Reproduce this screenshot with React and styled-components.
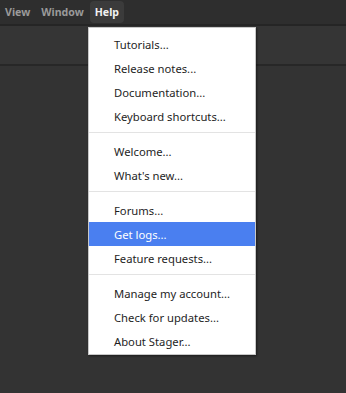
import React from "react";
import styled, { createGlobalStyle } from "styled-components";

const Global = createGlobalStyle`
  html, body { margin: 0; padding: 0; }
  body {
    background: #333333;
    font-family: "Noto Sans", "Open Sans", sans-serif;
    width: 346px;
    height: 393px;
    overflow: hidden;
  }
`;

const Page = styled.div`
  position: relative;
  width: 346px;
  height: 393px;
  background: #333333;
  display: flex;
  flex-direction: column;
`;

const MenuBar = styled.div`
  height: 24px;
  background: #2e2e2e;
  border-bottom: 2px solid #252525;
  display: flex;
  align-items: center;
`;

const MenuTitle = styled.div`
  font-family: "Noto Sans", sans-serif;
  font-weight: 700;
  font-size: 10.6px;
  color: ${(p) => (p.$active ? "#f2f2f2" : "#9a9a9a")};
  background: ${(p) => (p.$active ? "#3b3b3b" : "transparent")};
  border-radius: 4px;
  height: 22px;
  display: flex;
  align-items: center;
  padding: 0 5px;
  margin-right: 1px;
`;

const Toolbar = styled.div`
  height: 38px;
  background: #353535;
  border-bottom: 2px solid #272727;
`;

const Body = styled.div`
  flex: 1;
  background: #333333;
`;

const Dropdown = styled.div`
  position: absolute;
  left: 88px;
  top: 27px;
  width: 166px;
  background: #ffffff;
  border: 1px solid #c8c8c8;
  box-shadow: 1px 1px 2px rgba(0, 0, 0, 0.45);
  padding: 4px 0 1px 0;
  display: flex;
  flex-direction: column;
`;

const Item = styled.div`
  height: 24px;
  display: flex;
  align-items: center;
  padding-left: 25px;
  font-size: 11.25px;
  color: ${(p) => (p.$selected ? "#ffffff" : "#1e1e1e")};
  background: ${(p) => (p.$selected ? "#4a7ff0" : "transparent")};
  white-space: nowrap;
`;

const Separator = styled.div`
  height: 1px;
  background: #e3e3e3;
  margin: 4px 0 6px 0;
`;

const groups = [
  ["Tutorials...", "Release notes...", "Documentation...", "Keyboard shortcuts..."],
  ["Welcome...", "What's new..."],
  ["Forums...", "Get logs...", "Feature requests..."],
  ["Manage my account...", "Check for updates...", "About Stager..."],
];

export default function App() {
  return (
    <Page>
      <Global />
      <MenuBar>
        <MenuTitle>View</MenuTitle>
        <MenuTitle>Window</MenuTitle>
        <MenuTitle $active>Help</MenuTitle>
      </MenuBar>
      <Toolbar />
      <Body />
      <Dropdown>
        {groups.map((g, gi) => (
          <React.Fragment key={gi}>
            {gi > 0 && <Separator />}
            {g.map((t) => (
              <Item key={t} $selected={t === "Get logs..."}>
                {t}
              </Item>
            ))}
          </React.Fragment>
        ))}
      </Dropdown>
    </Page>
  );
}
